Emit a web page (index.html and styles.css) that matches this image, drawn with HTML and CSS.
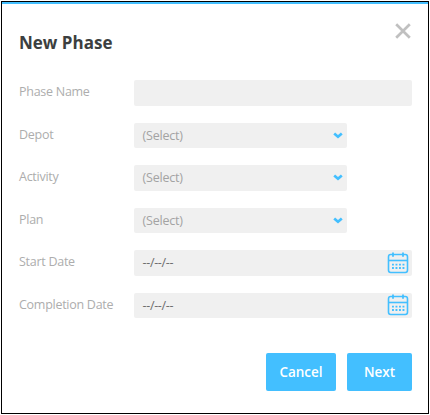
FILE: index.html
```html
<!DOCTYPE html>
<html lang="en">
<head>
<meta charset="utf-8">
<title>New Phase</title>
<link rel="stylesheet" href="styles.css">
</head>
<body>
<svg class="defs" width="0" height="0" aria-hidden="true">
  <symbol id="chevron" viewBox="0 0 10 7"><path d="M1.2 1.5 5 4.7 8.8 1.5" fill="none" stroke="currentColor" stroke-width="2.7"/></symbol>
  <symbol id="calendar" viewBox="0 0 22 22">
    <g fill="none" stroke="currentColor" stroke-width="1.6">
      <rect x="1.5" y="2.5" width="19" height="18" rx="2.2"/>
      <path d="M1.2 8.5h19.6"/>
      <path d="M6 .4v4.4M16 .4v4.4" stroke-width="1.8"/>
      <path d="M5 12.6h13M5 16h13" stroke-width="1.9" stroke-dasharray="1.9 1.6"/>
    </g>
  </symbol>
</svg>
<form class="dialog">
  <header class="header">
    <h1 class="title">New Phase</h1>
    <button class="close" type="button" aria-label="Close"><svg width="16" height="16" viewBox="0 0 16 16"><path d="M1.2 1.2 14.8 14.8M14.8 1.2 1.2 14.8" fill="none" stroke="currentColor" stroke-width="2.7"/></svg></button>
  </header>
  <div class="fields">
    <div class="row"><span class="label">Phase Name</span><div class="field"></div></div>
    <div class="row"><span class="label">Depot</span><div class="field select"><span>(Select)</span><svg class="chevron"><use href="#chevron"/></svg></div></div>
    <div class="row"><span class="label">Activity</span><div class="field select"><span>(Select)</span><svg class="chevron"><use href="#chevron"/></svg></div></div>
    <div class="row"><span class="label">Plan</span><div class="field select"><span>(Select)</span><svg class="chevron"><use href="#chevron"/></svg></div></div>
    <div class="row"><span class="label">Start Date</span><div class="field date"><span>--/--/--</span><svg class="calendar"><use href="#calendar"/></svg></div></div>
    <div class="row"><span class="label">Completion Date</span><div class="field date"><span>--/--/--</span><svg class="calendar"><use href="#calendar"/></svg></div></div>
  </div>
  <footer class="actions">
    <button class="btn cancel" type="button">Cancel</button>
    <button class="btn next" type="button">Next</button>
  </footer>
</form>
</body>
</html>
```
FILE: styles.css
```css
* { box-sizing: border-box; }
body {
  margin: 0;
  background: #fff;
  font-family: "Open Sans", "Noto Sans", sans-serif;
}
.defs { display: none; }
.dialog {
  width: 428px;
  height: 413px;
  margin: 1px;
  border: 1px solid #000;
  padding: 0 16px 0 17px;
  box-shadow: inset 0 2px #43bfff;
}
.header {
  display: flex;
  justify-content: space-between;
  height: 78px;
  padding-top: 21px;
}
.title {
  margin: 8px 0 0;
  font-size: 17px;
  line-height: 24px;
  font-weight: 700;
  color: #3c3f40;
}
.close {
  display: block;
  width: 16px;
  height: 16px;
  margin-right: 1px;
  padding: 0;
  border: 0;
  background: none;
  color: #c0c0c0;
}
.close svg { display: block; }
.fields {
  display: grid;
  row-gap: 17px;
}
.row {
  display: grid;
  grid-template-columns: 115px 278px;
  height: 25.5px;
}
.label {
  font-size: 12.5px;
  letter-spacing: -0.27px;
  line-height: 24px;
  color: #adadad;
  white-space: nowrap;
}
.field {
  display: flex;
  align-items: center;
  justify-content: space-between;
  background: #f0f0f0;
  border-radius: 2px;
  padding-left: 8.5px;
  font-size: 12.5px;
  letter-spacing: -0.2px;
  color: #a3a3a3;
}
.select { width: 213px; padding-right: 4px; }
.date { padding-right: 3px; color: #6e6e6e; letter-spacing: -0.32px; }
.chevron { width: 10px; height: 7px; color: #43bfff; }
.calendar { width: 22px; height: 22px; color: #43bfff; }
.actions {
  display: flex;
  justify-content: flex-end;
  gap: 11px;
  margin-top: 35px;
}
.btn {
  height: 38px;
  padding: 0;
  border: 0;
  border-radius: 2px;
  background: #43bfff;
  color: #fff;
  font: 600 13.5px "Open Sans", "Noto Sans", sans-serif;
}
.cancel { width: 70px; }
.next { width: 65px; }
```
